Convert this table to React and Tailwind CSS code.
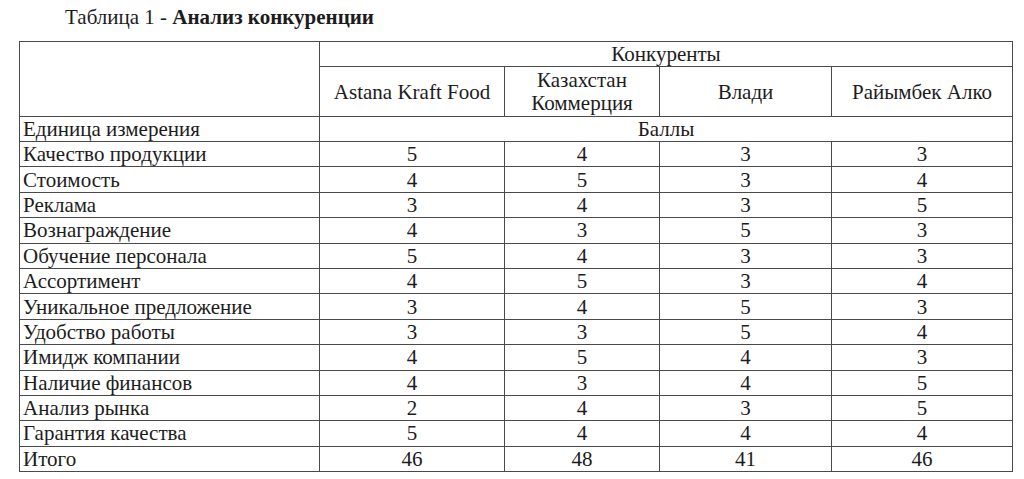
import React from "react";

const rows = [
  ["Качество продукции", "5", "4", "3", "3"],
  ["Стоимость", "4", "5", "3", "4"],
  ["Реклама", "3", "4", "3", "5"],
  ["Вознаграждение", "4", "3", "5", "3"],
  ["Обучение персонала", "5", "4", "3", "3"],
  ["Ассортимент", "4", "5", "3", "4"],
  ["Уникальное предложение", "3", "4", "5", "3"],
  ["Удобство работы", "3", "3", "5", "4"],
  ["Имидж компании", "4", "5", "4", "3"],
  ["Наличие финансов", "4", "3", "4", "5"],
  ["Анализ рынка", "2", "4", "3", "5"],
  ["Гарантия качества", "5", "4", "4", "4"],
  ["Итого", "46", "48", "41", "46"],
];

const cell = "border border-[#4a4a4a] p-0 font-['Liberation_Serif']";

export default function App() {
  return (
    <div className="w-[1024px] h-[479px] bg-white text-[#1c1c1c] overflow-hidden font-['Liberation_Serif']">
      <div className="h-[41px] pl-[65px] pt-[3px] text-[21px] leading-[28px] font-['Liberation_Serif']">
        Таблица 1 - <span className="font-bold">Анализ конкуренции</span>
      </div>
      <table className="ml-[19px] w-[993px] table-fixed border-collapse text-[21px] leading-[24px] font-['Liberation_Serif']">
        <colgroup>
          <col className="w-[300px]" />
          <col className="w-[185px]" />
          <col className="w-[155px]" />
          <col className="w-[172px]" />
          <col className="w-[181px]" />
        </colgroup>
        <tbody>
          <tr className="h-[25px]">
            <td rowSpan={2} className={cell}></td>
            <td colSpan={4} className={cell + " text-center"}>
              Конкуренты
            </td>
          </tr>
          <tr className="h-[50px]">
            <td className={cell + " text-center"}>Astana Kraft Food</td>
            <td className={cell + " text-center"}>
              <div className="leading-[23px]">Казахстан</div>
              <div className="leading-[23px]">Коммерция</div>
            </td>
            <td className={cell + " text-center"}>Влади</td>
            <td className={cell + " text-center"}>Райымбек Алко</td>
          </tr>
          <tr className="h-[25px]">
            <td className={cell + " pl-[3px]"}>Единица измерения</td>
            <td colSpan={4} className={cell + " text-center"}>
              Баллы
            </td>
          </tr>
          {rows.map((r) => (
            <tr key={r[0]} className="h-[25.4px]">
              <td className={cell + " pl-[3px] whitespace-nowrap"}>{r[0]}</td>
              {r.slice(1).map((v, i) => (
                <td key={i} className={cell + " text-center"}>
                  {v}
                </td>
              ))}
            </tr>
          ))}
        </tbody>
      </table>
    </div>
  );
}
